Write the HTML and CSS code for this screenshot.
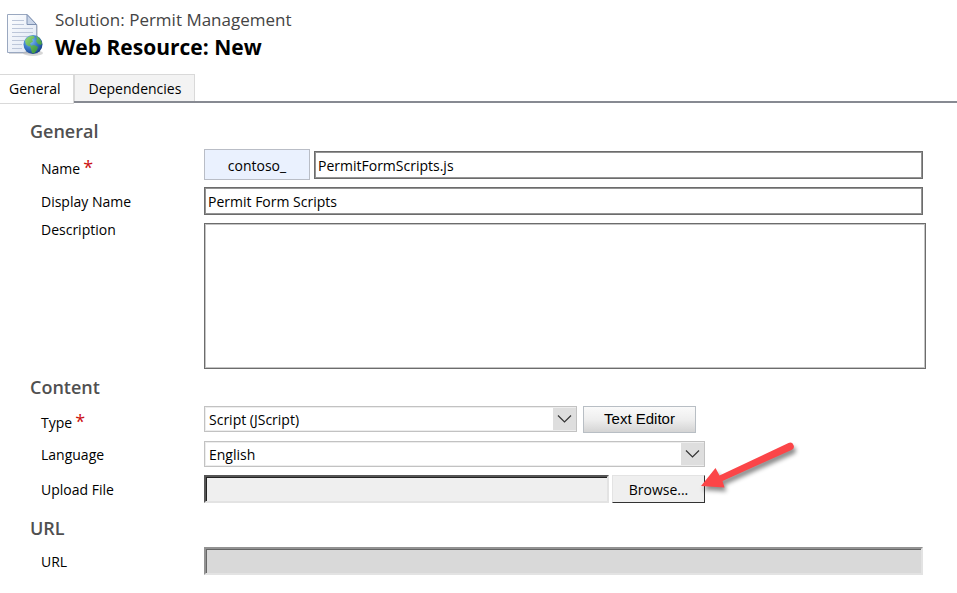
FILE: index.html
```html
<!DOCTYPE html>
<html lang="en">
<head>
<meta charset="utf-8">
<title>Web Resource: New</title>
<link rel="stylesheet" href="styles.css">
</head>
<body>
<header class="header">
  <svg class="header-icon" width="40" height="46" viewBox="0 0 40 46" aria-hidden="true">
    <defs>
      <linearGradient id="paper" x1="0" y1="0" x2="1" y2="1">
        <stop offset="0" stop-color="#fdfeff"/><stop offset="1" stop-color="#dde5f3"/>
      </linearGradient>
      <radialGradient id="sea" cx=".35" cy=".3" r=".75">
        <stop offset="0" stop-color="#8fc4f5"/><stop offset=".5" stop-color="#3d7fcc"/><stop offset="1" stop-color="#173f86"/>
      </radialGradient>
      <linearGradient id="land" x1="0" y1="0" x2="1" y2="1">
        <stop offset="0" stop-color="#9bdc79"/><stop offset="1" stop-color="#23852f"/>
      </linearGradient>
    </defs>
    <path d="M2 41h28V12l1 2v28H2z" fill="#d5d7dc"/>
    <path d="M.5 2.500H20l9.500 10V40.500H.5z" fill="url(#paper)" stroke="#9aa8c0"/>
    <path d="M20 2.500v10h9.500z" fill="#c9d5e8" stroke="#7e91b2"/>
    <path d="M5 8.500h12M5 12.500h12M5 16.500h21M5 20.500h21M5 24.500h20M5 28.500h12M5 32.500h10M5 36.500h10" stroke="#bcc6d9"/>
    <ellipse cx="26" cy="41" rx="10" ry="3" fill="#bbb" opacity=".6"/>
    <circle cx="26" cy="32.500" r="9.500" fill="url(#sea)"/>
    <path d="M18 29c1-3 4-5 8-5.500l2 2-3 2 1 2-3 2 1 2-2 1-3-2zM29 24c3 1 5 4 6 7l-1 2-3-1-2-3 1-2zM23 34l4-1 4 2-1 3-3 3.500-2-.5-1-4z" fill="url(#land)"/>
  </svg>
  <div class="header-text">
    <p class="solution">Solution: Permit Management</p>
    <h1 class="title">Web Resource: New</h1>
  </div>
</header>

<nav class="tabs">
  <a class="tab tab-active" href="#general">General</a>
  <a class="tab" href="#dependencies">Dependencies</a>
</nav>

<form class="form" id="general">
  <section class="section">
    <h2 class="section-title">General</h2>
    <div class="rows">
      <div class="row row-name">
        <label class="label label-required" for="name">Name<span class="star">*</span></label>
        <div class="field"><span class="prefix">contoso_</span><input class="text" id="name" type="text" value="PermitFormScripts.js"></div>
      </div>
      <div class="row">
        <label class="label" for="display">Display Name</label>
        <div class="field"><input class="text" id="display" type="text" value="Permit Form Scripts"></div>
      </div>
      <div class="row row-description">
        <label class="label label-top" for="description">Description</label>
        <textarea class="area" id="description"></textarea>
      </div>
    </div>
  </section>

  <section class="section section-content">
    <h2 class="section-title">Content</h2>
    <div class="rows">
      <div class="row">
        <label class="label label-required" for="type">Type<span class="star">*</span></label>
        <div class="field">
          <div class="picker picker-type">
            <select class="select" id="type"><option>Script (JScript)</option></select>
            <svg class="chevron" viewBox="0 0 23 22" aria-hidden="true"><path d="M5 7.500l6.500 6.500L18 7.500"/></svg>
          </div>
          <button class="editor" type="button">Text Editor</button>
        </div>
      </div>
      <div class="row row-language">
        <label class="label" for="language">Language</label>
        <div class="picker picker-language">
          <select class="select" id="language"><option>English</option></select>
          <svg class="chevron" viewBox="0 0 23 22" aria-hidden="true"><path d="M5 7.500l6.500 6.500L18 7.500"/></svg>
        </div>
      </div>
      <div class="row">
        <label class="label" for="upload">Upload File</label>
        <div class="upload">
          <input class="sunken" id="upload" type="text" readonly>
          <button class="browse" type="button">Browse...</button>
          <svg class="arrow" width="100" height="60" viewBox="0 0 100 60" aria-hidden="true">
            <path d="M2 47L16.500 29l4 7.500L89.500 4a3.500 3.500 0 0 1 3 7L23.500 42l2 6.500z" fill="#fb4548"/>
          </svg>
        </div>
      </div>
    </div>
  </section>

  <section class="section">
    <h2 class="section-title">URL</h2>
    <div class="rows">
      <div class="row">
        <label class="label" for="url">URL</label>
        <div class="field"><input class="sunken sunken-url" id="url" type="text" disabled></div>
      </div>
    </div>
  </section>
</form>
</body>
</html>
```
FILE: styles.css
```css
* {
  box-sizing: border-box;
}

body {
  margin: 0;
  background: #fff;
  color: #000;
  font: 14px/20px "Open Sans", "Noto Sans", sans-serif;
}

input,
select,
textarea,
button {
  margin: 0;
  border-radius: 0;
  color: inherit;
  font: inherit;
}

.header {
  display: flex;
  gap: 8px;
  height: 74px;
  padding: 8px 0 0 7px;
}

.header-icon {
  margin-top: 4px;
}

.solution,
.title {
  margin: 0;
}

.solution {
  color: #444;
  font-size: 17px;
  line-height: 24px;
}

.title {
  font-size: 21px;
  font-weight: 700;
  line-height: 30px;
}

.tabs {
  display: flex;
  height: 29px;
  background: linear-gradient(#878a92, #878a92) 0 100% / 100% 2px no-repeat;
}

.tab {
  height: 27px;
  padding: 0 13px 0 14px;
  border: 1px solid #d9d9d9;
  border-bottom: 0;
  background: #f3f3f3;
  color: #000;
  line-height: 27px;
  text-decoration: none;
}

.tab-active {
  height: 30px;
  padding: 0 12px 0 9px;
  border-bottom: 1px solid #d9d9d9;
  border-left: 0;
  background: #fff;
}

.form {
  padding: 17px 31px 18px 30px;
}

.section {
  margin-bottom: 7px;
}

.section-content {
  margin-bottom: 14px;
}

.section-title {
  margin: 0 0 7px;
  color: #505050;
  font-size: 18px;
  font-weight: 600;
  line-height: 22px;
}

.section-content + .section .section-title {
  margin-bottom: 8px;
}

.rows {
  display: grid;
  gap: 8px;
  padding-left: 11px;
}

.row {
  display: grid;
  grid-template-columns: 163px 1fr;
  align-items: center;
  min-height: 28px;
}

.row-name {
  height: 30px;
}

.row-language {
  min-height: 26px;
}

.label {
  padding-top: 2px;
}

.label-required {
  padding-top: 8px;
}

.label-top {
  align-self: start;
  padding-top: 0;
  line-height: 14px;
}

.star {
  margin-left: 3px;
  color: #c11;
  font-size: 18px;
  line-height: 14px;
}

.field {
  display: flex;
  align-items: center;
  gap: 6px;
  padding-right: 3px;
}

.row-name .field {
  gap: 4px;
}

.prefix {
  width: 106px;
  height: 31px;
  border: 1px solid #b9bdc6;
  background: #eaf1fe;
  line-height: 31px;
  text-align: center;
}

.text {
  flex: 1;
  min-width: 0;
  height: 28px;
  padding: 1px 3px 0;
  border: 1px solid #6c6c6c;
  box-shadow: inset 0 0 0 1px #949494;
}

.area {
  display: block;
  width: 100%;
  height: 146px;
  border: 1px solid #6c6c6c;
  box-shadow: inset 0 0 0 1px #c4c4c4;
  background: #fff;
  resize: none;
}

.picker {
  position: relative;
  height: 26px;
}

.picker-type {
  width: 373px;
}

.picker-language {
  width: 501px;
}

.select {
  width: 100%;
  height: 100%;
  padding: 2px 30px 0 4px;
  border: 1px solid #c2c2c2;
  background: #fff;
  box-shadow: inset 0 0 0 1px #ededed;
  appearance: none;
}

.chevron {
  position: absolute;
  top: 2px;
  right: 1px;
  width: 23px;
  height: 22px;
  background: #dedede;
  fill: none;
  stroke: #333;
  stroke-width: 1.2;
  pointer-events: none;
}

.editor {
  width: 113px;
  height: 27px;
  padding: 0;
  border: 1px solid #b8bec4;
  background: linear-gradient(#fafafa, #eee 50%, #d4d4d4);
  font: 15px/20px "Liberation Sans", sans-serif;
}

.upload {
  position: relative;
  display: flex;
  gap: 3px;
  width: 501px;
}

.sunken {
  flex: 1;
  min-width: 0;
  height: 28px;
  padding: 0 2px;
  border: 2px solid;
  border-color: #555 #e3e3e3 #e3e3e3 #555;
  background: #efefef;
  box-shadow: inset 1px 1px 0 #222;
}

.sunken-url {
  border-color: #929292 #e3e3e3 #e3e3e3 #929292;
  background: #d9d9d9;
  box-shadow: inset 1px 1px 0 #666;
}

.browse {
  width: 93px;
  height: 28px;
  padding: 2px 0 0;
  border: 1px solid;
  border-color: #e3e3e3 #333 #333 #e3e3e3;
  background: #efefef;
}

.arrow {
  position: absolute;
  top: -36px;
  left: 495px;
  filter: drop-shadow(2px 4px 2px rgba(0, 0, 0, .45));
  overflow: visible;
  pointer-events: none;
}
```
